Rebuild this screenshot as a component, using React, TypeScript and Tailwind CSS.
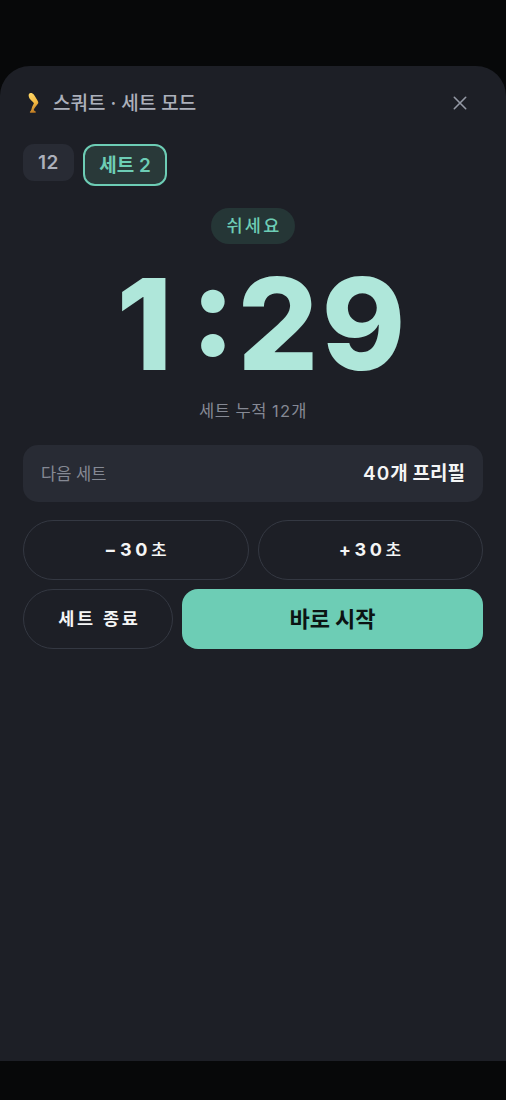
import type { ReactNode } from 'react'

function SquatLeg() {
  return (
    <svg className="h-[22px] w-[20px]" viewBox="0 0 20 22" fill="none">
      <defs>
        <linearGradient id="skin" x1="4" y1="2" x2="13" y2="20" gradientUnits="userSpaceOnUse">
          <stop offset="0" stopColor="#ffd869" />
          <stop offset="0.55" stopColor="#f5bb43" />
          <stop offset="1" stopColor="#b97420" />
        </linearGradient>
      </defs>
      <path
        d="M6.8 1.2C8.3.6 9.8 1.2 10.8 2.6C12 4.4 13.7 7.3 15 9.4C15.5 10.4 15.4 11.2 14.7 12.1C13.3 13.9 11.3 16.2 10.7 17.9C10.9 18.7 12.9 19.3 13 20C13 20.5 12.6 20.7 12 20.7H7.4C6.8 20.7 6.6 20.3 7 19.8C7.7 19.1 8.1 18.5 8.4 17.6C8.7 15.6 9.7 13.4 10.9 11.4C10.8 10.6 9.9 9.8 8.9 8.9C7.5 7.7 6.2 6.4 5.8 4.4C5.5 3.1 5.7 1.7 6.8 1.2Z"
        fill="url(#skin)"
      />
    </svg>
  )
}

function OutlineButton({ className, children }: { className: string; children: ReactNode }) {
  return (
    <button className={`h-[60px] rounded-[30px] border border-[#343842] font-bold text-[#f4f5f5] ${className}`}>
      {children}
    </button>
  )
}

export default function App() {
  return (
    <div className="flex h-[1100px] w-full flex-col bg-[#070809] pt-[66px] pb-[39px] font-[Inter,'Noto_Sans_CJK_KR',sans-serif]">
      <main className="flex flex-1 flex-col rounded-t-[30px] bg-[#1d1f26] px-[23px] pt-[23px]">
        {/* Header */}
        <header className="flex h-7 items-center justify-between">
          <div className="flex items-center gap-[10px]">
            <SquatLeg />
            <h1 className="pt-[2px] text-[19px] leading-7 font-medium whitespace-nowrap text-[#acb0bb]">스쿼트 · 세트 모드</h1>
          </div>
          <button className="mr-[16px]" aria-label="닫기">
            <svg className="size-[14px]" viewBox="0 0 14 14" fill="none" stroke="#9499a5" strokeWidth="1.6" strokeLinecap="round">
              <path d="M1.3 1.3l11.4 11.4M12.7 1.3L1.3 12.7" />
            </svg>
          </button>
        </header>

        {/* Sets */}
        <div className="mt-[27px] flex items-start gap-[9px]">
          <div className="flex h-[37px] w-[51px] items-center justify-center rounded-[11px] bg-[#282b34] pt-[2px] text-[19px] font-semibold tracking-[0.5px] text-[#acb0bb]">
            12
          </div>
          <div className="flex h-[42px] w-[84px] items-center justify-center rounded-[12px] border-2 border-[#6dcdb5] bg-[#293939] pt-[2px] text-[19px] font-semibold whitespace-nowrap text-[#6dcdb5]">
            세트 2
          </div>
        </div>

        {/* Rest timer */}
        <section className="mt-[22px] flex flex-col items-center">
          <div className="flex h-[36px] w-[84px] items-center justify-center rounded-full bg-[#253636] pl-[2px] text-[17.5px] font-medium tracking-[2.3px] text-[#6dcdb5]">
            쉬세요
          </div>
          <div className="mt-[16px] flex pl-[16px] text-[127px] leading-[128px] font-extrabold text-[#afe7da]">
            <span className="w-[74px]">1</span>
            <span className="-mt-[14px] w-[47px]">:</span>
            <span className="w-[84px]">2</span>
            <span>9</span>
          </div>
          <p className="mt-[11px] text-[16.5px] leading-6 tracking-[0.5px] text-[#858994]">
            세트 누적 <span className="tracking-[1.3px]">12</span>개
          </p>
        </section>

        {/* Next set */}
        <div className="mt-[22px] flex h-[57px] items-center justify-between rounded-[15px] bg-[#282b34] px-[18px]">
          <span className="pt-px text-[16.5px] text-[#858994]">다음 세트</span>
          <span className="pt-[2px] text-[19px] font-semibold text-[#f4f5f5]">
            <span className="tracking-[1px]">40</span>개 프리필
          </span>
        </div>

        {/* Actions */}
        <div className="mt-[18px] flex gap-[9px]">
          <OutlineButton className="flex-1 pl-[3px] text-[18px] tracking-[3.6px]">
            −30<span className="text-[17px] font-medium">초</span>
          </OutlineButton>
          <OutlineButton className="flex-1 pl-[3px] text-[18px] tracking-[3.6px]">
            +30<span className="text-[17px] font-medium">초</span>
          </OutlineButton>
        </div>
        <div className="mt-[9px] flex gap-[9px]">
          <OutlineButton className="w-[150px] pl-[3px] text-[17.5px] tracking-[2.8px]">세트 종료</OutlineButton>
          <button className="h-[60px] flex-1 rounded-[16px] bg-[#6dcdb5] text-[22px] font-bold text-[#0c1413]">바로 시작</button>
        </div>
      </main>
    </div>
  )
}
